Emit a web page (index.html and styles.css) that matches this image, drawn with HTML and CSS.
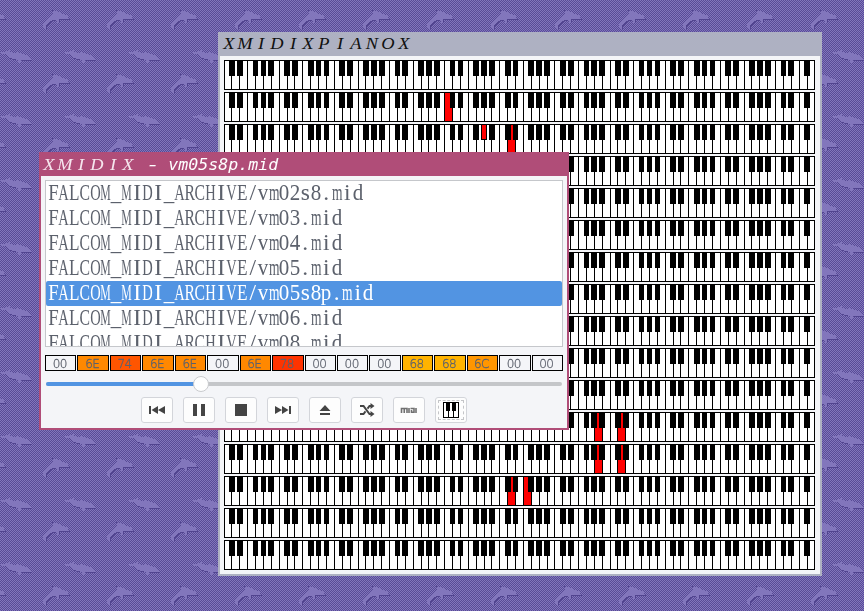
FILE: index.html
```html
<!DOCTYPE html>
<html lang="en">
<head>
<meta charset="utf-8">
<title>XMIDIX</title>
<link rel="stylesheet" href="styles.css">
</head>
<body>
<svg class="wallpaper" width="864" height="611" shape-rendering="crispEdges">
  <defs>
    <pattern id="check" width="2" height="2" patternUnits="userSpaceOnUse">
      <rect width="2" height="2" fill="#584b96"/>
      <rect width="1" height="1" fill="#8276bc"/><rect x="1" y="1" width="1" height="1" fill="#8276bc"/>
    </pattern>
    <g id="leap">
      <path fill="#51448f" d="M52 10h1v1h-1zM59 19h11v1h-11zM58 22h1v-2h1v2h-1zM47 24l5-4h4v1h-4l-5 5v3h-1v-4z"/>
      <path fill="#8276bc" d="M43 23l5-5l5-4v-2l-1-1h2l1 1l2-1l2 1h1l3 2l3 1l2 2l1 2h-10v3h-1v1h-1v-3h-4l-3 1l-3 3l-1 1v4h-1l-2-2z"/>
    </g>
    <g id="swim">
      <path fill="#51448f" d="M22 60h10v1h-10zM5 54l4 3l5 2h5v1h-5l-6-2l-3-3z"/>
      <path fill="#8276bc" d="M1 52h3l2-1h2l1-1h1v2h1l3 1l1 1h1v-2l1-1l2 2l3 1l1-1l2 2l3 1l2 2l1 2h-10v2h-1v2h-1v-2h-1v-2l-5-1l-5-2l-2-3h-4z"/>
    </g>
    <pattern id="tile" width="64" height="64" patternUnits="userSpaceOnUse">
      <rect width="64" height="64" fill="url(#check)"/>
      <use href="#leap"/><use href="#leap" x="-64"/><use href="#swim"/>
    </pattern>
  </defs>
  <rect width="864" height="611" fill="url(#tile)"/>
</svg>

<section class="window piano">
  <header class="titlebar"><span class="logo">XMIDIXPIANOX</span></header>
  <div class="keyboards" id="keyboards"></div>
</section>

<section class="window player">
  <header class="titlebar"><span class="logo">XMIDIX</span><span class="file"> <span class="dash">-</span> vm05s8p.mid</span></header>
  <div class="content">
    <ul class="files">
      <li>FALCOM_MIDI_ARCHIVE/vm02s8.mid</li>
      <li>FALCOM_MIDI_ARCHIVE/vm03.mid</li>
      <li>FALCOM_MIDI_ARCHIVE/vm04.mid</li>
      <li>FALCOM_MIDI_ARCHIVE/vm05.mid</li>
      <li class="selected">FALCOM_MIDI_ARCHIVE/vm05s8p.mid</li>
      <li>FALCOM_MIDI_ARCHIVE/vm06.mid</li>
      <li>FALCOM_MIDI_ARCHIVE/vm08.mid</li>
    </ul>
    <div class="channels">
      <div>00</div><div class="v6e">6E</div><div class="v74">74</div><div class="v6e">6E</div>
      <div class="v6e">6E</div><div>00</div><div class="v6e">6E</div><div class="v78">78</div>
      <div>00</div><div>00</div><div>00</div><div class="v68">68</div>
      <div class="v68">68</div><div class="v6c">6C</div><div>00</div><div>00</div>
    </div>
    <div class="slider"><div class="fill"></div><div class="knob"></div></div>
    <div class="buttons">
      <button aria-label="Previous"><svg width="16" height="16" viewBox="0 0 16 16"><path d="M0 4h2v8H0zM9 4v8L2.500 8zM16 4v8L9 8z"/></svg></button>
      <button aria-label="Pause"><svg width="16" height="16" viewBox="0 0 16 16"><path d="M2 2h4v12H2zM10 2h4v12h-4z"/></svg></button>
      <button aria-label="Stop"><svg width="16" height="16" viewBox="0 0 16 16"><path d="M2 2h12v12H2z"/></svg></button>
      <button aria-label="Next"><svg width="16" height="16" viewBox="0 0 16 16"><path d="M14 4h2v8h-2zM7 4v8l6.500-4zM0 4v8l7-4z"/></svg></button>
      <button aria-label="Eject"><svg width="16" height="16" viewBox="0 0 16 16"><path d="M8 3l5.500 6h-11zM3 11h10v2H3z"/></svg></button>
      <button aria-label="Shuffle"><svg width="16" height="16" viewBox="0 0 16 16"><path d="M1 4h3.500l6 8H13M1 12h3.500l2-2.700M8.500 6.700l2-2.700H13" fill="none" stroke="#444" stroke-width="2"/><path d="M11.500 1l4 3-4 3zM11.500 9l4 3-4 3z"/></svg></button>
      <button aria-label="MIDI"><svg width="18" height="16" viewBox="0 0 18 16"><path d="M1.500 11V6.500h5.500V11M4.250 6.500V11M9 6v5M10.500 6.500h3.500v3.700H11.500V8M16 6v5" fill="none" stroke="#707070" stroke-width="1.600"/></svg></button>
      <button class="focused" aria-label="Piano"><svg width="16" height="16" viewBox="0 0 16 16" shape-rendering="crispEdges"><path d="M0 0h16v16H0z" fill="#000"/><path d="M1 1h14v14H1z" fill="#fff"/><path d="M3 1h4v8H6v6H5V9H3zM9 1h4v8h-2v6h-1V9H9z" fill="#000"/></svg></button>
    </div>
  </div>
</section>
<script src="piano.js"></script>
</body>
</html>
```
FILE: styles.css
```css
* { box-sizing: border-box; }
body { margin: 0; width: 864px; height: 611px; overflow: hidden; background: #6e62a7; font-family: "Liberation Sans", sans-serif; }
.wallpaper { position: fixed; top: 0; left: 0; }

.window { position: absolute; background: #f4f5f8; border-style: solid; border-width: 0 2px 2px; }
.piano { left: 218px; top: 32px; width: 604px; height: 544px; border-color: #aeb1c2; color: #111; }
.player { left: 39px; top: 152px; width: 530px; height: 278px; border-color: #b04d78; color: #fff; }

.titlebar { height: 24px; display: flex; align-items: center; white-space: pre; }
.piano .titlebar { background: #aeb1c2; }
.player .titlebar { background: #b04d78; }
.logo { display: flex; font: italic 16px "Liberation Serif", serif; padding-left: 1px; }
.logo span { width: 15.9px; text-align: center; transform: scaleX(1.15); }
.player .logo { color: #f6e6ee; padding: 1px 1px 0 0; }
.file { font: italic 16.6px "DejaVu Sans Mono", monospace; line-height: 24px; padding: 1px 0 0 1px; }
.dash { display: inline-block; transform: scaleX(1.4); }

.keyboards { display: flex; flex-direction: column; gap: 2px; padding: 4px; }
.keyboards svg { display: block; }

.content { padding: 4px 4px 0; }
.files { list-style: none; margin: 0; padding: 0; width: 518px; height: 167px; overflow: hidden; background: #fff; border: 1px solid #c5c7cb; }
.files li { display: flex; height: 25px; padding-left: 2px; color: #5c616c; font: 23.5px/23px "Liberation Serif", serif; }
.files .cell { width: 10.5px; display: flex; justify-content: center; }
.files .selected { background: #5294e2; color: #fff; border-radius: 2px; }

.channels { display: flex; gap: 1px; width: 518px; margin-top: 8px; }
.channels div { flex: 1; height: 16px; padding-right: 2px; border: 1px solid #000; text-align: center; color: #5c616c; font: 200 12px/16px "DejaVu Sans", sans-serif; letter-spacing: -.6px; -webkit-text-stroke: .3px #5c616c; }
.channels .v6e { background: #ff8800; }
.channels .v74 { background: #ff5500; }
.channels .v78 { background: #ff3300; }
.channels .v68 { background: #ffb300; }
.channels .v6c { background: #ff9600; }

.slider { position: relative; width: 516px; height: 4px; margin: 11px 0 0 1px; border-radius: 2px; background: #c4c6c9; }
.fill { width: 155px; height: 4px; border-radius: 2px; background: #5294e2; }
.knob { position: absolute; left: 147px; top: -6px; width: 16px; height: 16px; border: 1px solid #c8cacd; border-radius: 50%; background: #fff; }

.buttons { display: flex; gap: 10px; margin: 11px 0 0 96px; }
button { width: 32px; height: 26px; padding: 0; border: 1px solid #d3d5da; border-radius: 3px; background: #fdfdfd; display: flex; align-items: center; justify-content: center; fill: #444; }
.focused { outline: 1px dashed #c4c5c8; outline-offset: -4px; }
```
FILE: piano.js
```js
// Title letters each sit in a fixed-width cell.
document.querySelectorAll(".logo").forEach(function (logo) {
  logo.innerHTML = logo.textContent.split("").map(function (c) { return "<span>" + c + "</span>"; }).join("");
});

// File names use half-width cells: glyphs wider than a cell are condensed to fit.
document.querySelectorAll(".files li").forEach(function (row) {
  row.innerHTML = row.textContent.split("").map(function (c) {
    return '<span class="cell"><span class="glyph">' + c + "</span></span>";
  }).join("");
});
document.querySelectorAll(".glyph").forEach(function (g) {
  var w = g.getBoundingClientRect().width;
  g.style.flex = "none";
  g.style.transform = "scaleX(" + Math.min(1, 10.5 / w) + ")";
});

// One 128-note keyboard per MIDI channel; 75 white keys each.
var STEP = 7.8777;
var whiteOn = { 1: [28], 2: [36], 11: [47, 50], 12: [47, 50], 13: [36, 38] };
var blackOn = { 2: [33] };

function rect(x, y, w, h, fill) {
  return '<rect x="' + x + '" y="' + y + '" width="' + w + '" height="' + h + '" fill="' + fill + '"/>';
}
function line(k) { return k === 75 ? 590 : Math.floor(k * STEP + 0.08); }

function keyboard(channel) {
  var out = rect(0, 0, 591, 30, "#000");
  for (var k = 0; k < 75; k++) {
    var on = (whiteOn[channel] || []).indexOf(k) >= 0;
    out += rect(line(k) + 1, 1, line(k + 1) - line(k) - 1, 28, on ? "#f00" : "#fff");
  }
  for (k = 1; k < 75; k++) {
    if (k % 7 === 0 || k % 7 === 3) continue;
    var l = Math.round(k * STEP - 2.77), r = Math.round(k * STEP + 2.96);
    out += rect(l, 1, r - l, 15, "#000");
    if ((blackOn[channel] || []).indexOf(k) >= 0) out += rect(l + 1, 1, r - l - 2, 14, "#f00");
  }
  return '<svg width="591" height="30" shape-rendering="crispEdges">' + out + "</svg>";
}

var html = "";
for (var c = 0; c < 16; c++) html += keyboard(c);
document.getElementById("keyboards").innerHTML = html;
```
